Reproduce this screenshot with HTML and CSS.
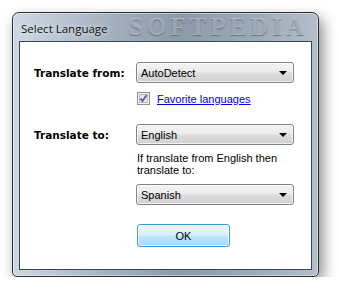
FILE: index.html
```html
<!DOCTYPE html>
<html lang="en">

<head>
    <meta charset="UTF-8">
    <title>Select Language</title>
    <link rel="stylesheet" href="styles.css">
</head>

<body>
    <div class="window">
        <div class="titlebar">
            <span class="title">Select Language</span>
            <span class="mark">SOFTPEDIA</span>
        </div>
        <div class="client">
            <div class="row">
                <span class="label">Translate from:</span>
                <div class="combo"><span>AutoDetect</span><i class="arrow"></i></div>
            </div>
            <div class="row check-row">
                <span class="label"></span>
                <label class="check">
                    <svg width="13" height="13" viewBox="0 0 13 13">
                        <rect x="0.5" y="0.5" width="12" height="12" fill="#f4f4f4" stroke="#8e8f8f" />
                        <rect x="2.5" y="2.5" width="8" height="8" fill="#e6e9ee" stroke="#b4bac4" />
                        <path d="M3.5 6.5 L5.5 9 L9.5 3.2" fill="none" stroke="#4a5f97" stroke-width="1.8" />
                    </svg>
                    <a href="#">Favorite languages</a>
                </label>
            </div>
            <div class="row to-row">
                <span class="label">Translate to:</span>
                <div class="combo"><span>English</span><i class="arrow"></i></div>
            </div>
            <div class="row">
                <span class="label"></span>
                <p class="note">If translate from English then<br>translate to:</p>
            </div>
            <div class="row">
                <span class="label"></span>
                <div class="combo"><span>Spanish</span><i class="arrow"></i></div>
            </div>
            <div class="row ok-row">
                <span class="label"></span>
                <button class="ok">OK</button>
            </div>
        </div>
    </div>
</body>

</html>
```

FILE: styles.css
```css
body {
    margin: 0;
    background-color: #fff;
    font-family: 'Liberation Sans', Arial, sans-serif;
    font-size: 11px;
    color: #000;
}

.window {
    margin: 12px 0 0 12px;
    width: 305px;
    height: 263px;
    border: 1px solid #2c3036;
    border-radius: 7px 7px 5px 5px;
    background: linear-gradient(to right, #cfd9e3 0%, #a5b3c1 30%, #8a9aa9 55%, #9cabb8 80%, #b3bfca 100%);
    box-shadow: inset 0 0 0 1px rgba(255, 255, 255, 0.45), 4px 6px 14px rgba(0, 0, 0, 0.45);
    display: flex;
    flex-direction: column;
}

.titlebar {
    position: relative;
    height: 28px;
}

.title {
    position: relative;
    z-index: 1;
    display: block;
    padding: 8px 0 0 8px;
    font-family: 'Open Sans', 'Noto Sans', sans-serif;
    font-size: 11.5px;
    color: #111;
    text-shadow: 0 0 6px rgba(255, 255, 255, 0.9);
}

.mark {
    position: absolute;
    left: 116px;
    top: 3px;
    line-height: 22px;
    font-family: 'Liberation Serif', serif;
    font-weight: bold;
    font-size: 25px;
    letter-spacing: 4px;
    color: rgba(200, 210, 220, 0.55);
    text-shadow: 0 1px 1px rgba(60, 70, 80, 0.5);
}

.client {
    flex: 1;
    margin: 0 6px 6px 6px;
    background-color: #fff;
    border: 1px solid #3c4753;
    padding-top: 20px;
}

.row {
    display: grid;
    grid-template-columns: 116px 158px;
    align-items: center;
}

.label {
    padding-left: 14px;
    font-family: 'DejaVu Sans', sans-serif;
    font-weight: bold;
    font-size: 10.5px;
}

.combo {
    display: flex;
    align-items: center;
    justify-content: space-between;
    height: 19px;
    padding: 0 6px 0 4px;
    border: 1px solid #838383;
    border-radius: 3px;
    background: linear-gradient(#f3f3f3 0%, #ebebeb 48%, #dddddd 52%, #d0d0d0 100%);
    box-shadow: inset 0 0 0 1px rgba(255, 255, 255, 0.7);
}

.arrow {
    width: 0;
    height: 0;
    border-left: 4px solid transparent;
    border-right: 4px solid transparent;
    border-top: 4px solid #000;
}

.check-row {
    margin-top: 9px;
}

.check {
    display: flex;
    align-items: center;
    gap: 7px;
    padding-left: 1px;
}

.check svg {
    display: block;
}

.check a {
    color: #0000ee;
    text-decoration: underline;
}

.to-row {
    margin-top: 19px;
}

.note {
    margin: 7px 0 8px 1px;
    line-height: 12px;
}

.ok-row {
    margin-top: 19px;
    justify-items: start;
}

.ok {
    width: 93px;
    height: 23px;
    margin-left: 1px;
    border: 1px solid #3c9ad6;
    border-radius: 3px;
    background: linear-gradient(#eaf6fd 0%, #d9f0fc 48%, #bee6fd 52%, #a7d9f5 100%);
    box-shadow: inset 0 0 0 1px rgba(255, 255, 255, 0.8);
    font-family: 'Liberation Sans', Arial, sans-serif;
    font-size: 11px;
    color: #000;
}
```
